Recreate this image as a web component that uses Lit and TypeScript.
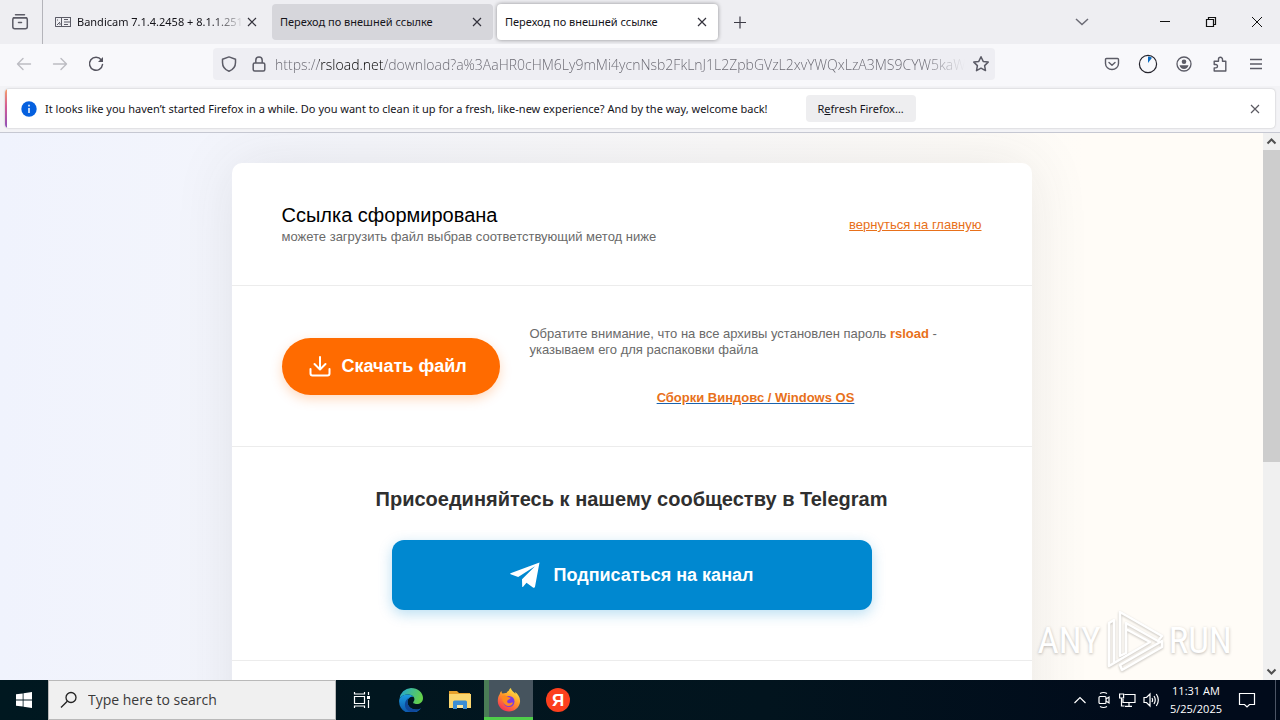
import { LitElement, html, css } from "lit";
import { customElement } from "lit/decorators.js";

const closeIcon = html`<svg width="16" height="16" viewBox="0 0 16 16" fill="none" stroke="#33323c" stroke-width="1.2"><path d="M4 4l8 8M12 4l-8 8" /></svg>`;

@customElement("browser-tabs")
class BrowserTabs extends LitElement {
  static styles = css`
    :host { display: flex; align-items: center; height: 44px; background: #eeeef2; font: 11px/16px "Noto Sans", "Open Sans", sans-serif; color: #15141a; }
    button { border: 0; background: none; padding: 0; display: grid; place-items: center; font: inherit; color: inherit; }
    .view { width: 43px; height: 44px; padding-right: 2px; box-sizing: border-box; border-right: 1px solid #b4b4ba; }
    .tabs { display: flex; gap: 4px; margin-left: 4px; flex: 0 1 671px; min-width: 0; }
    .tab { display: flex; align-items: center; flex: 1; min-width: 0; height: 36px; box-sizing: border-box; padding: 0 8px; border-radius: 4px; }
    .tab svg { flex: none; }
    .label { flex: 1; min-width: 0; white-space: nowrap; overflow: hidden; }
    .fade { margin-left: 6px; -webkit-mask-image: linear-gradient(to left, transparent, #000 32px); mask-image: linear-gradient(to left, transparent, #000 32px); }
    .dim { background: #d6d6db; }
    .active { background: #fff; box-shadow: 0 0 4px rgba(0, 0, 0, 0.4); }
    .new { width: 36px; height: 36px; margin-left: 4px; }
    .list { width: 36px; height: 36px; margin-left: auto; margin-right: 42px; }
    .window { display: flex; }
    .window button { width: 46px; height: 44px; }
  `;
  render() {
    return html`
      <button class="view" aria-label="Firefox View">
        <svg width="18" height="18" viewBox="0 0 18 18" fill="none" stroke="#5b5b66" stroke-width="1.5" stroke-linecap="round"><path d="M4.500 1.800h9M2.500 4.800h13M7.500 9.500h3" /><rect x="1.800" y="4.800" width="14.500" height="11" rx="2" /></svg>
      </button>
      <div class="tabs" role="tablist">
        <div class="tab" role="tab">
          <svg width="16" height="16" viewBox="0 0 16 16" fill="none" stroke="#5b5b66"><path d="M.5 3.500h6v9h-6zM.5 3.500h15M.5 12.500h15M9 8h6.500M15.500 3v10M9 5.500h4M9 10.500h4M2 11l3-3M2 6h1M4 10h2" /></svg>
          <span class="label fade">Bandicam 7.1.4.2458 + 8.1.1.251</span>
          <button aria-label="Close tab">${closeIcon}</button>
        </div>
        <div class="tab dim" role="tab">
          <span class="label">Переход по внешней ссылке</span>
          <button aria-label="Close tab">${closeIcon}</button>
        </div>
        <div class="tab active" role="tab" aria-selected="true">
          <span class="label">Переход по внешней ссылке</span>
          <button aria-label="Close tab">${closeIcon}</button>
        </div>
      </div>
      <button class="new" aria-label="New tab">
        <svg width="16" height="16" viewBox="0 0 16 16" stroke="#3c3b46" stroke-width="1.200"><path d="M2 8.500h12M8 2.500v12" /></svg>
      </button>
      <button class="list" aria-label="List all tabs">
        <svg width="16" height="16" viewBox="0 0 16 16" fill="none" stroke="#6b6b75" stroke-width="1.500"><path d="M2 5l6 5.500L14 5" /></svg>
      </button>
      <div class="window">
        <button aria-label="Minimize"><svg width="12" height="12" stroke="#111"><path d="M1 5.500h10" /></svg></button>
        <button aria-label="Restore"><svg width="12" height="12" fill="none" stroke="#111" stroke-width="1.200"><path d="M1.500 3.500h7v7h-7zM3.500 3.500v-2h7v7h-2" /></svg></button>
        <button aria-label="Close"><svg width="12" height="12" stroke="#111"><path d="M1 1l10 10M11 1L1 11" /></svg></button>
      </div>
    `;
  }
}

@customElement("browser-toolbar")
class BrowserToolbar extends LitElement {
  static styles = css`
    :host { display: flex; align-items: center; height: 40px; padding: 0 6px 2px; background: #f8f8fb; border-bottom: 1px solid #f3f3f6; }
    button { border: 0; background: none; padding: 0; width: 36px; height: 36px; display: grid; place-items: center; flex: none; }
    .gap { flex: 0 1 99px; }
    .url { flex: 1 1 600px; min-width: 0; display: flex; align-items: center; height: 32px; border-radius: 4px; background: #eeeef3; }
    .url button { width: 28px; height: 32px; }
    .url .shield { width: 32px; }
    input {
      flex: 1; min-width: 0; border: 0; outline: 0; padding: 0; margin: 0 2px; height: 24px;
      font: 300 14px/20px "Open Sans", "Noto Sans", sans-serif;
      color: #66656e; -webkit-text-fill-color: transparent;
      background: linear-gradient(to right, #66656e 44px, #000 44px, #000 109px, #66656e 109px, #66656e calc(100% - 40px), transparent) text;
      -webkit-background-clip: text;
    }
  `;
  render() {
    return html`
      <button aria-label="Back"><svg width="16" height="16" viewBox="0 0 16 16" fill="none" stroke="#bcbcc2" stroke-width="1.400" stroke-linecap="round" stroke-linejoin="round"><path d="M14.500 8H1.500M7 2.500L1.500 8 7 13.500" /></svg></button>
      <button aria-label="Forward"><svg width="16" height="16" viewBox="0 0 16 16" fill="none" stroke="#bcbcc2" stroke-width="1.400" stroke-linecap="round" stroke-linejoin="round"><path d="M1.500 8h13M9 2.500L14.500 8 9 13.500" /></svg></button>
      <button aria-label="Reload"><svg width="16" height="16" viewBox="0 0 16 16" fill="none" stroke="#55545f" stroke-width="1.500" stroke-linecap="round"><path d="M13.200 3.800A6.500 6.500 0 1 0 14.500 8.500" /><path d="M15 1v5h-5z" fill="#55545f" stroke="none" /></svg></button>
      <span class="gap"></span>
      <div class="url">
        <button class="shield" aria-label="Tracking protection"><svg width="16" height="16" viewBox="0 0 16 16" fill="none" stroke="#5b5b66" stroke-width="1.500" stroke-linejoin="round"><path d="M8 .9l6.500 2.300v3.300c0 4-2.500 7.200-6.500 8.700-4-1.500-6.500-4.700-6.500-8.700V3.200z" /></svg></button>
        <button aria-label="Site information"><svg width="16" height="16" viewBox="0 0 16 16" fill="none" stroke="#5b5b66" stroke-width="1.500"><rect x="2.200" y="7" width="11.600" height="8" rx="1.500" /><path d="M4.800 7V4.200a3.200 3.200 0 0 1 6.400 0V7" /></svg></button>
        <input aria-label="Address" value="https://rsload.net/download?a%3AaHR0cHM6Ly9mMi4ycnNsb2FkLnJ1L2ZpbGVzL2xvYWQxLzA3MS9CYW5kaWN" />
        <button aria-label="Bookmark this page"><svg width="18" height="18" viewBox="0 0 18 18" fill="none" stroke="#5b5b66" stroke-width="1.500" stroke-linejoin="round"><path d="M9 1.800l2.200 4.600 5 .7-3.600 3.500.9 5L9 13.200l-4.500 2.400.9-5L1.800 7.100l5-.7z" /></svg></button>
      </div>
      <span class="gap"></span>
      <button aria-label="Pocket"><svg width="16" height="16" viewBox="0 0 16 16" fill="none" stroke="#5b5b66" stroke-width="1.400" stroke-linecap="round" stroke-linejoin="round"><path d="M2.500 2.500h11q1 0 1 1V7.500a6.500 6 0 0 1-13 0V3.500q0-1 1-1z" /><path d="M5 6.500l3 2.700 3-2.700" /></svg></button>
      <button aria-label="Progress"><svg width="20" height="20" viewBox="0 0 20 20"><circle cx="10" cy="10" r="8.600" fill="none" stroke="#24232c" stroke-width="1.200" /><path d="M10 9V2.500a7.500 7.500 0 0 1 4 1.300z" fill="#0d6cc0" /></svg></button>
      <button aria-label="Account"><svg width="16" height="16" viewBox="0 0 16 16"><circle cx="8" cy="8" r="7" fill="none" stroke="#5b5b66" stroke-width="1.300" /><circle cx="8" cy="5.700" r="2.300" fill="#5b5b66" /><path d="M3.500 9.300h9c-.5 2.300-2.200 3.700-4.500 3.700s-4-1.400-4.500-3.700z" fill="#5b5b66" /></svg></button>
      <button aria-label="Extensions"><svg width="16" height="16" viewBox="0 0 16 16" fill="none" stroke="#5b5b66" stroke-width="1.400" stroke-linejoin="round"><path d="M2.200 15h11.600V5.200h-3.300V3.300a2 2 0 0 0-4 0v1.900H2.200v3.300h1.600a1.700 1.700 0 0 1 0 3.400H2.200z" /></svg></button>
      <button aria-label="Menu"><svg width="16" height="16" viewBox="0 0 16 16" stroke="#5b5b66" stroke-width="1.400"><path d="M2 3.500h12M2 8h12M2 12.500h12" /></svg></button>
    `;
  }
}

@customElement("browser-notice")
class BrowserNotice extends LitElement {
  static styles = css`
    :host { display: block; padding: 2px 5px 4px; background: #f3f3f6; border-bottom: 1px solid #c6c8d2; font: 11px/16px "Noto Sans", "Open Sans", sans-serif; color: #15141a; }
    .bar { position: relative; display: flex; align-items: center; height: 39px; padding: 0 12px 0 16px; background: #fff; border-radius: 4px; box-shadow: 0 0 2px rgba(0, 0, 0, 0.25); overflow: hidden; }
    .bar::before { content: ""; position: absolute; left: 0; top: 0; bottom: 0; width: 2px; background: linear-gradient(#f5a06a, #d35a95 45%, #8d50b8); }
    .text { margin: 0 38px 0 8px; white-space: nowrap; }
    button { border: 0; background: none; padding: 0; font: inherit; color: inherit; display: grid; place-items: center; }
    .refresh { display: block; background: #eeeef0; height: 27px; padding: 0 12px; border-radius: 4px; white-space: nowrap; }
    .close { margin-left: auto; width: 16px; height: 16px; opacity: 0.8; }
    svg { flex: none; }
  `;
  render() {
    return html`<div class="bar" role="status">
      <svg width="16" height="16" viewBox="0 0 16 16"><circle cx="8" cy="8" r="7.700" fill="#0560df" /><path d="M8 7v5M8 3.800v1.700" stroke="#fff" stroke-width="1.500" /></svg>
      <span class="text">It looks like you haven’t started Firefox in a while. Do you want to clean it up for a fresh, like-new experience? And by the way, welcome back!</span>
      <button class="refresh">R<u>e</u>fresh Firefox…</button>
      <button class="close" aria-label="Dismiss">${closeIcon}</button>
    </div>`;
  }
}

@customElement("download-page")
class DownloadPage extends LitElement {
  static styles = css`
    :host { display: flex; flex: 1; min-height: 0; font: 13px/16px "Liberation Sans", Arial, sans-serif; color: #6a6a6a; position: relative; }
    .view { flex: 1; min-width: 0; overflow: hidden; background: linear-gradient(90deg, #f0f3fd, #fffcf7 86%); }
    .card { max-width: 800px; min-height: 640px; margin: 30px auto 0; background: #fff; border-radius: 10px; box-shadow: 0 0 60px rgba(60, 60, 60, 0.1); }
    section { padding: 40px 50px; border-bottom: 1px solid #ececec; }
    .head { display: flex; justify-content: space-between; align-items: center; padding-bottom: 38px; }
    .head p { line-height: 20px; }
    h1 { font-size: 20px; line-height: 24px; font-weight: 400; color: #000; margin: 0; }
    p { margin: 0; }
    a { color: #e8701a; }
    .files { display: flex; align-items: center; gap: 30px; }
    .download { display: flex; align-items: center; gap: 11px; width: 218px; height: 57px; padding: 0 0 0 27px; box-sizing: border-box; flex: none; border: 0; border-radius: 29px; background: #ff6b00; color: #fff; font: 700 18px/20px "Liberation Sans", Arial, sans-serif; box-shadow: 0 4px 12px rgba(255, 107, 0, 0.25); }
    .info { flex: 1; }
    .os { text-align: center; font-weight: 700; margin-top: 32px; }
    .os a { text-decoration: underline #1a62ad; }
    strong { color: #e8701a; }
    .community { text-align: center; padding-bottom: 50px; }
    h2 { font-size: 20px; line-height: 24px; color: #2f2f2f; margin: 0 0 29px; }
    .subscribe { display: flex; align-items: center; justify-content: center; gap: 14px; max-width: 480px; height: 70px; margin: 0 auto; border-radius: 12px; background: #0088d0; color: #fff; font-size: 18px; line-height: 20px; font-weight: 700; text-decoration: none; box-shadow: 0 4px 14px rgba(0, 136, 208, 0.28); }
    .scroll { width: 17px; flex: none; display: flex; flex-direction: column; background: #f0f0f0; }
    .scroll svg { flex: none; }
    .thumb { flex: 0 1 57%; background: #cdcdcd; }
    .scroll .down { margin-top: auto; }
    .mark { position: absolute; right: 48px; bottom: 8px; display: flex; align-items: center; gap: 5px; color: #fff; font: 37px/60px "Liberation Sans Narrow", "Roboto Condensed", "Liberation Sans", sans-serif; text-shadow: 0 1px 3px rgba(90, 85, 80, 0.4); }
    .mark svg { filter: drop-shadow(0 1px 1px rgba(90, 85, 80, 0.35)); }
  `;
  render() {
    return html`
      <main class="view">
        <div class="card">
          <section class="head">
            <div><h1>Ссылка сформирована</h1><p>можете загрузить файл выбрав соответствующий метод ниже</p></div>
            <a href="#">вернуться на главную</a>
          </section>
          <section class="files">
            <button class="download">
              <svg width="22" height="22" viewBox="0 0 22 22" fill="none" stroke="#fff" stroke-width="2" stroke-linecap="round" stroke-linejoin="round"><path d="M1.500 14v4.500q0 2 2 2h15q2 0 2-2V14M11 2v12M5.500 9l5.500 5.500L16.500 9" /></svg>
              Скачать файл
            </button>
            <div class="info">
              <p>Обратите внимание, что на все архивы установлен пароль <strong>rsload</strong> - указываем его для распаковки файла</p>
              <p class="os"><a href="#">Сборки Виндовс / Windows OS</a></p>
            </div>
          </section>
          <section class="community">
            <h2>Присоединяйтесь к нашему сообществу в Telegram</h2>
            <a class="subscribe" href="#">
              <svg width="30" height="26" viewBox="0 0 30 26" fill="#fff"><path d="M29.500.5L.5 11.300q-.6.500.1.900L8.200 15 25 4.300 12 17.300l.2 7.200q.2 1 .9.300l3.400-4 6.800 4.900q1.300.6 1.700-.9z" /></svg>
              Подписаться на канал
            </a>
          </section>
        </div>
      </main>
      <div class="scroll" aria-hidden="true">
        <svg width="17" height="17" fill="none" stroke="#505050" stroke-width="2"><path d="M4.500 10.500l4-4 4 4" /></svg>
        <div class="thumb"></div>
        <svg class="down" width="17" height="17" fill="none" stroke="#505050" stroke-width="2"><path d="M4.500 6.500l4 4 4-4" /></svg>
      </div>
      <div class="mark">
        <span>ANY</span>
        <svg width="58" height="62" viewBox="0 0 58 62" fill="none" stroke="#fff" stroke-width="2.500" stroke-linejoin="round"><path d="M14 2l42 24-4 5-32-18v30l-6 3zM20 19l24 13L8 53V10l-5 3v43l17-10M14 55l42-24v6L16 60z" /></svg>
        <span>RUN</span>
      </div>
    `;
  }
}

@customElement("task-bar")
class TaskBar extends LitElement {
  static styles = css`
    :host { display: flex; align-items: stretch; height: 40px; background: linear-gradient(90deg, #001820, #02141e 60%, #010b1b 90%); color: #fff; font: 11px/18px "Open Sans", "Noto Sans", sans-serif; }
    button { border: 0; background: none; padding: 0; width: 49px; display: grid; place-items: center; color: inherit; font: inherit; box-sizing: border-box; }
    .start { width: 48px; }
    .search { display: flex; align-items: center; gap: 10px; width: 288px; box-sizing: border-box; padding: 0 11px; background: #f0f0f0; border: 1px solid #b9b9b9; }
    input { flex: 1; min-width: 0; border: 0; outline: 0; padding: 0; background: none; font: 14px/20px "Open Sans", "Noto Sans", sans-serif; color: #3a3a3a; }
    input::placeholder { color: #3a3a3a; opacity: 1; }
    .apps { display: flex; padding-left: 1px; }
    .open { background: linear-gradient(90deg, #4a7d55 5px, #46545e 5px); border-bottom: 3px solid #4fce4a; padding-top: 3px; }
    .tray { margin-left: auto; display: flex; align-items: center; }
    .tray button { width: 24px; height: 40px; }
    .clock { text-align: center; padding-left: 6px; }
    .tray .note { width: 49px; margin-right: 4px; }
    .desk { width: 5px; height: 40px; border-left: 1px solid #4c5565; box-sizing: border-box; }
  `;
  render() {
    return html`
      <button class="start" aria-label="Start"><svg width="16" height="16" fill="#fff"><path d="M0 2.300L6.700 1.400V7.600H0zM7.500 1.200L16 0v7.600H7.500zM0 8.400h6.700v6.200L0 13.700zM7.500 8.400H16V16l-8.500-1.200z" /></svg></button>
      <label class="search">
        <svg width="18" height="18" viewBox="0 0 18 18" fill="none" stroke="#222" stroke-width="1.300"><circle cx="11" cy="6.500" r="5" /><path d="M7.300 10.200L1 16.500" /></svg>
        <input placeholder="Type here to search" aria-label="Type here to search" />
      </label>
      <div class="apps">
      <button aria-label="Task view"><svg width="18" height="18" viewBox="0 0 18 18" fill="none" stroke="#fff" stroke-width="1.200"><path d="M1.500 5.500h10v7h-10zM1.500 1v2h10V1M1.500 17v-2h10v2M15.500 1v3M15.500 9v8" /><path d="M14 5h3v3h-3z" fill="#fff" stroke="none" /></svg></button>
      <button aria-label="Edge"><svg width="24" height="24" viewBox="0 0 24 24">
        <defs>
          <linearGradient id="e1" x1="0" y1="0" x2="1" y2=".3"><stop offset="0" stop-color="#1ea4dc" /><stop offset="1" stop-color="#63d04b" /></linearGradient>
          <linearGradient id="e2" x1="0" y1="0" x2="0" y2="1"><stop offset="0" stop-color="#1b9de2" /><stop offset="1" stop-color="#0b54a8" /></linearGradient>
        </defs>
        <path d="M.5 11A12 12 0 0 1 12 0c7 0 12 4.800 12 10 0 4-3 6-6.200 6-2.600 0-4.300-1-3.300-2.300C17 10.500 14 6.500 9.500 6.500 5 6.500 1.500 8.500.5 11z" fill="url(#e1)" />
        <path d="M.2 12C.8 8.500 4.800 6.500 9 6.500c2.700 0 4.800 1 5.700 2.500-3-.7-6.200 1.500-6.200 5 0 4.500 4 7.500 8.500 7.500 2 0 3.700-.5 5-1.300A12 12 0 0 1 .2 12z" fill="url(#e2)" />
        <path d="M8.500 14c0 4.500 4 7.500 8.500 7.500 2 0 3.700-.5 5-1.300A12 12 0 0 1 12 24c-4.500-1-7-5-5.800-9.500.5-2 2-4 4-5-1.200 1.200-1.700 2.700-1.700 4.500z" fill="#10489a" />
      </svg></button>
      <button aria-label="File Explorer"><svg width="22" height="20" viewBox="0 0 22 20"><path d="M0 1h8l2 2h11v6H0z" fill="#e6a12c" /><path d="M0 4h22v14H0z" fill="#fbd66f" /><path d="M4 19v-7q0-1.500 1.500-1.500h11Q18 10.500 18 12v7h-4v-4H8v4z" fill="#3b8dd4" /><path d="M8 15h6v3H8z" fill="#fbe6a0" /></svg></button>
      <button class="open" aria-label="Firefox"><svg width="24" height="24" viewBox="0 0 24 24">
        <defs><linearGradient id="f1" x1=".8" y1="0" x2=".2" y2="1"><stop offset="0" stop-color="#fff04a" /><stop offset=".45" stop-color="#ff9a28" /><stop offset="1" stop-color="#f5265b" /></linearGradient></defs>
        <path d="M4.500 3c0 1 .3 2 1 2.600C7 5 8.500 4.800 9.500 5c.5-1 1.500-2 2.500-2.500C12 1.500 13 .5 14 0c0 2.500 3 4 4.500 6L18 4c3 2 5.500 5.500 5 10-.6 5.500-5.500 9.500-11 9.500S1 19.500.8 13.500c-.1-3 .5-5.500 2-7.500.2-1.200.9-2.300 1.700-3z" fill="url(#f1)" />
        <circle cx="12" cy="13.500" r="5.500" fill="#7a3be0" /><path d="M5 8c2-1 4-.5 5.500.7 1 .8 3 .5 3 1.300 0 1-2 1.300-3 2.500s0 2.800 2 2.800c1.500 0 2.500-1 3.500-.6-.5 2-2.500 3.300-4.500 3.300-4 0-7-5-6.500-10z" fill="#ff8a1e" />
      </svg></button>
      <button aria-label="Yandex"><svg width="24" height="24" viewBox="0 0 24 24"><circle cx="12" cy="12" r="12" fill="#fc3f1d" /><text x="12" y="18" text-anchor="middle" fill="#fff" font-family="Liberation Sans" font-weight="700" font-size="17">Я</text></svg></button>
      </div>
      <div class="tray">
        <button aria-label="Show hidden icons"><svg width="14" height="14" fill="none" stroke="#fff" stroke-width="1.200"><path d="M1.500 10L7 4.500 12.500 10" /></svg></button>
        <button aria-label="Camera"><svg width="14" height="18" viewBox="0 0 14 18" fill="none" stroke="#fff" stroke-width="1.200"><rect x="2" y="5.500" width="7" height="7" rx="1" /><path d="M9 8l3-2v6L9 10M3 2.500q3.500-2 7 0M3 15.500q3.500 2 7 0" /></svg></button>
        <button aria-label="Network"><svg width="17" height="16" viewBox="0 0 17 16" fill="none" stroke="#fff" stroke-width="1.200"><path d="M5.500 2.500h10.500v8H4V7M10 10.500V14M6 14.400h7M.6 2h4v4h-4zM2.500 6v8h3" /></svg></button>
        <button aria-label="Volume"><svg width="17" height="16" viewBox="0 0 17 16" fill="none" stroke="#fff" stroke-width="1.200"><path d="M1 5.500h2.500L7 2v12l-3.500-3.500H1zM9 6q1.200 2 0 4M11 4q2.500 4 0 8M13.300 2q4 6 0 12" /></svg></button>
        <div class="clock">11:31 AM<br />5/25/2025</div>
        <button class="note" aria-label="Notifications"><svg width="18" height="18" fill="none" stroke="#fff" stroke-width="1.200"><path d="M1.500 2.500h15v11H11.500L9 16l-2.500-2.500h-5z" /></svg></button>
        <span class="desk"></span>
      </div>
    `;
  }
}

@customElement("app-root")
class AppRoot extends LitElement {
  static styles = css`
    :host { display: flex; flex-direction: column; height: 100vh; overflow: hidden; }
  `;
  render() {
    return html`<browser-tabs></browser-tabs><browser-toolbar></browser-toolbar><browser-notice></browser-notice><download-page></download-page><task-bar></task-bar>`;
  }
}
